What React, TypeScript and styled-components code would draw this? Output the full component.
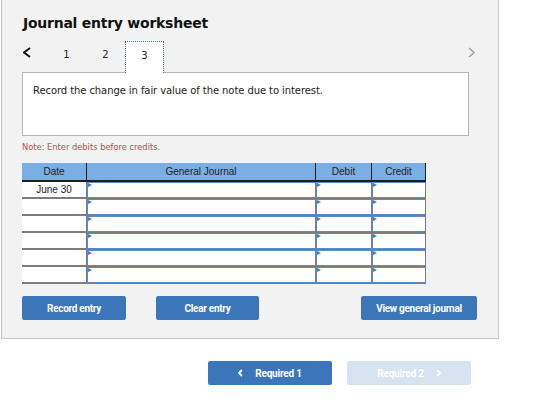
import React from "react";
import styled, { createGlobalStyle } from "styled-components";

const GlobalStyle = createGlobalStyle`
    html, body {
        margin: 0;
        padding: 0;
        background: #ffffff;
    }
`;

const Page = styled.div`
    width: 552px;
    padding-left: 1px;
    box-sizing: border-box;
`;

const Panel = styled.div`
    width: 498px;
    box-sizing: border-box;
    background: #f2f2f2;
    border: 1px solid #c6c6c6;
    border-top: none;
    padding: 13px 0 18px 20px;
`;

const Title = styled.h1`
    margin: 0 0 0 1px;
    font-family: "DejaVu Sans", sans-serif;
    font-weight: bold;
    font-size: 14px;
    letter-spacing: -0.25px;
    line-height: 20px;
    color: #111;
`;

const TabRow = styled.div`
    display: flex;
    align-items: stretch;
    width: 457px;
    height: 32px;
    margin-top: 8px;
    margin-bottom: -1px;
    position: relative;
    z-index: 1;
`;

const Arrow = styled.button<{ side: "prev" | "next" }>`
    width: ${p => (p.side === "prev" ? "25px" : "16px")};
    margin-left: ${p => (p.side === "next" ? "auto" : "0")};
    padding: 6px 0 0 ${p => (p.side === "prev" ? "1px" : "0")};
    border: none;
    background: none;
    display: flex;
    justify-content: ${p => (p.side === "prev" ? "flex-start" : "center")};
    align-items: flex-start;
`;

const Tab = styled.div<{ active?: boolean }>`
    width: 39px;
    box-sizing: border-box;
    display: flex;
    justify-content: center;
    padding-top: 8px;
    font-family: "DejaVu Sans", sans-serif;
    font-size: 10px;
    line-height: 12px;
    color: #222;
    background: ${p => (p.active ? "#ffffff" : "transparent")};
    border: ${p => (p.active ? "1.5px dotted #4a6fa5" : "none")};
    border-bottom: none;
`;

const PromptBox = styled.div`
    width: 447px;
    height: 64px;
    box-sizing: border-box;
    background: #ffffff;
    border: 1px solid #b5b5b5;
    padding: 11px 0 0 10px;
    font-family: "DejaVu Sans", sans-serif;
    font-size: 10px;
    letter-spacing: -0.08px;
    line-height: 13px;
    color: #222;
`;

const Note = styled.div`
    margin-top: 6px;
    font-family: "DejaVu Sans", sans-serif;
    font-size: 8.3px;
    line-height: 11px;
    color: #c9484b;
`;

const Grid = styled.div`
    display: grid;
    grid-template-columns: 64px 229px 56px 55px;
    width: 404px;
    margin-top: 10px;
`;

const HeadCell = styled.div<{ last?: boolean; first?: boolean }>`
    height: 19px;
    box-sizing: border-box;
    background: #7aafe5;
    border-bottom: 2px solid #1e1e1e;
    border-left: ${p => (p.first ? "none" : "1px solid #1e1e1e")};
    border-right: ${p => (p.last ? "1px solid #1e1e1e" : "none")};
    display: flex;
    align-items: center;
    justify-content: center;
    font-family: "Liberation Sans", Arial, sans-serif;
    font-size: 10px;
    color: #222;
`;

const DateCell = styled.div`
    height: 17px;
    box-sizing: border-box;
    background: #ffffff;
    border-bottom: 2px solid #7c7c7c;
    display: flex;
    align-items: center;
    justify-content: center;
    font-family: "Liberation Sans", Arial, sans-serif;
    font-size: 10px;
    color: #222;
`;

const InputCell = styled.div<{ last?: boolean }>`
    position: relative;
    height: 17px;
    box-sizing: border-box;
    background: #ffffff;
    border-left: 1px solid #7c7c7c;
    border-right: ${p => (p.last ? "1px solid #7c7c7c" : "none")};
    border-bottom: 1px solid #7c7c7c;
    box-shadow: inset 1px 1px 0 #5a8bc9, inset 0 -1px 0 #5a8bc9;

    &::before {
        content: "";
        position: absolute;
        left: 1px;
        top: 1px;
        border-top: 2px solid transparent;
        border-bottom: 2px solid transparent;
        border-left: 4px solid #3a7bd0;
    }
`;

const ButtonRow = styled.div`
    display: flex;
    width: 455px;
    margin-top: 12px;
`;

const ActionButton = styled.button<{ w: number; push?: "gap" | "auto" }>`
    width: ${p => p.w}px;
    height: 24px;
    margin-left: ${p => (p.push === "gap" ? "30px" : p.push === "auto" ? "auto" : "0")};
    border: none;
    border-radius: 2px;
    background: #3a76b9;
    color: #ffffff;
    font-family: Roboto, "Liberation Sans", sans-serif;
    font-weight: 700;
    font-size: 10px;
    letter-spacing: -0.3px;
    padding: 0;
`;

const NavRow = styled.div`
    display: flex;
    gap: 15px;
    margin-top: 22px;
    padding-left: 207px;
`;

const NavButton = styled.button<{ disabled?: boolean }>`
    width: 124px;
    height: 24px;
    border: none;
    border-radius: 2px;
    background: ${p => (p.disabled ? "#d6e3f1" : "#3a76b9")};
    color: #ffffff;
    display: flex;
    align-items: center;
    justify-content: center;
    gap: 12px;
    font-family: Roboto, "Liberation Sans", sans-serif;
    font-weight: 700;
    font-size: 10px;
    letter-spacing: -0.2px;
    padding: 0;
`;

const Chevron = ({ dir, color, w, h, sw }: { dir: "l" | "r"; color: string; w: number; h: number; sw: number }) => (
    <svg width={w} height={h} viewBox={`0 0 ${w} ${h}`}>
        <polyline
            points={dir === "l" ? `${w - 1},1 1,${h / 2} ${w - 1},${h - 1}` : `1,1 ${w - 1},${h / 2} 1,${h - 1}`}
            fill="none"
            stroke={color}
            strokeWidth={sw}
        />
    </svg>
);

const rows = ["June 30", "", "", "", "", ""];

const App: React.FC = () => (
    <Page>
        <GlobalStyle />
        <Panel>
            <Title>Journal entry worksheet</Title>
            <TabRow>
                <Arrow side="prev">
                    <Chevron dir="l" color="#111" w={8} h={11} sw={2} />
                </Arrow>
                <Tab>1</Tab>
                <Tab>2</Tab>
                <Tab active>3</Tab>
                <Arrow side="next">
                    <Chevron dir="r" color="#9a9a9a" w={7} h={11} sw={1.4} />
                </Arrow>
            </TabRow>
            <PromptBox>Record the change in fair value of the note due to interest.</PromptBox>
            <Note>Note: Enter debits before credits.</Note>
            <Grid>
                <HeadCell first>Date</HeadCell>
                <HeadCell>General Journal</HeadCell>
                <HeadCell>Debit</HeadCell>
                <HeadCell last>Credit</HeadCell>
                {rows.map((d, i) => (
                    <React.Fragment key={i}>
                        <DateCell>{d}</DateCell>
                        <InputCell />
                        <InputCell />
                        <InputCell last />
                    </React.Fragment>
                ))}
            </Grid>
            <ButtonRow>
                <ActionButton w={104}>Record entry</ActionButton>
                <ActionButton w={103} push="gap">Clear entry</ActionButton>
                <ActionButton w={116} push="auto">View general journal</ActionButton>
            </ButtonRow>
        </Panel>
        <NavRow>
            <NavButton>
                <Chevron dir="l" color="#fff" w={5} h={8} sw={1.8} />
                Required 1
            </NavButton>
            <NavButton disabled>
                Required 2
                <Chevron dir="r" color="#fff" w={5} h={8} sw={1.8} />
            </NavButton>
        </NavRow>
    </Page>
);

export default App;
